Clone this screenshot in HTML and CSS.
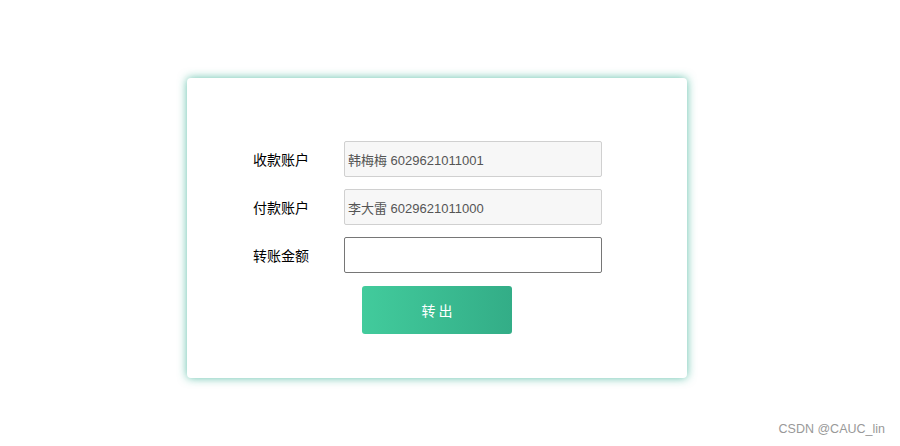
FILE: index.html
```html
<!DOCTYPE html>
<html lang="zh">
<head>
<meta charset="utf-8">
<title>转账</title>
<link rel="stylesheet" href="styles.css">
</head>
<body>
<div class="page">
  <div class="card">
    <form class="form">
      <div class="row">
        <label class="label">收款账户</label>
        <input class="input readonly" type="text" value="韩梅梅 6029621011001" readonly>
      </div>
      <div class="row">
        <label class="label">付款账户</label>
        <input class="input readonly" type="text" value="李大雷 6029621011000" readonly>
      </div>
      <div class="row">
        <label class="label">转账金额</label>
        <input class="input" type="text" value="">
      </div>
      <div class="actions">
        <button class="btn" type="button">转 出</button>
      </div>
    </form>
  </div>
  <div class="watermark">CSDN @CAUC_lin</div>
</div>
</body>
</html>
```
FILE: styles.css
```css
html, body {
  margin: 0;
  padding: 0;
  background: #fff;
}
body {
  font-family: "Liberation Sans", Arial, "Noto Sans CJK SC", sans-serif;
  width: 900px;
  height: 446px;
  overflow: hidden;
}
.page {
  position: relative;
  width: 900px;
  height: 446px;
  padding-top: 78px;
  box-sizing: border-box;
}
.card {
  margin-left: 187px;
  width: 500px;
  height: 300px;
  box-sizing: border-box;
  background: #fff;
  border-radius: 4px;
  box-shadow: 0 0 10px rgba(30, 165, 135, 0.7);
  padding-top: 63px;
  padding-left: 66px;
}
.form {
  margin: 0;
}
.row {
  display: flex;
  align-items: center;
  height: 36px;
  margin-bottom: 12px;
}
.label {
  width: 91px;
  font-size: 14px;
  color: #000;
  font-family: "Noto Sans CJK SC", sans-serif;
  line-height: 36px;
}
.input {
  width: 258px;
  height: 36px;
  box-sizing: border-box;
  border: 1px solid #767676;
  border-radius: 2px;
  padding: 0 3px;
  font-size: 13px;
  color: #555;
  font-family: "Liberation Sans", Arial, "Noto Sans CJK SC", sans-serif;
  background: #fff;
  outline: none;
  margin: 0;
}
.input.readonly {
  background: #f7f7f7;
  border-color: #d0d0d0;
}
.actions {
  padding-left: 109px;
  padding-top: 1px;
}
.btn {
  width: 150px;
  height: 48px;
  border: none;
  border-radius: 3px;
  background: linear-gradient(to right, #42cb9c, #33ad87);
  color: #fff;
  font-size: 14px;
  font-family: "Noto Sans CJK SC", sans-serif;
  cursor: pointer;
  padding: 0;
}
.watermark {
  position: absolute;
  right: 15px;
  top: 422px;
  font-size: 12.5px;
  color: #999;
  font-family: "Liberation Sans", Arial, sans-serif;
}
```
